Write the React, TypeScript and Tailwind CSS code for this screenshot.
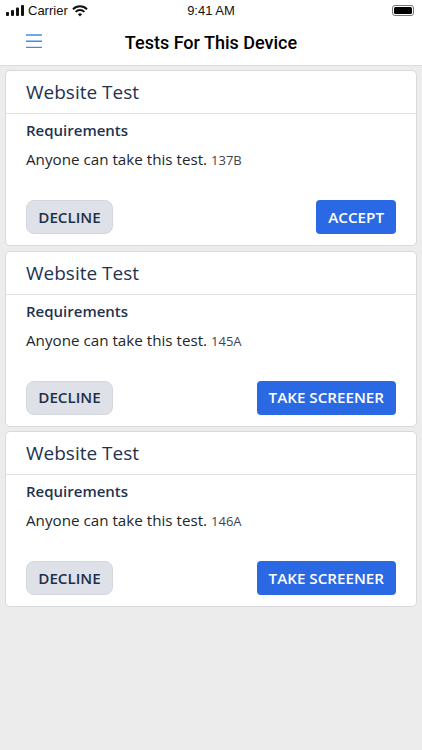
const tests = [
  { code: '137B', action: 'ACCEPT' },
  { code: '145A', action: 'TAKE SCREENER' },
  { code: '146A', action: 'TAKE SCREENER' },
];

function TestCard({ code, action }: { code: string; action: string }) {
  return (
    <div className="h-[176px] bg-white rounded-[5px] border border-[#d8dadd] flex flex-col">
      <div className="h-[43px] px-5 pt-[1px] flex items-center border-b border-[#dfe1e4] text-[19px] text-[#1f3350]">
        Website Test
      </div>
      <div className="flex-1 px-5 pt-[6px] flex flex-col">
        <div className="text-[15px] leading-[20px] font-semibold text-[#1f3350]">Requirements</div>
        <div className="mt-[9px] text-[15.2px] leading-[20px] text-[#22262b]">
          Anyone can take this test. <span className="text-[13px] text-[#3d4650]">{code}</span>
        </div>
        <div className="mt-auto mb-[11px] flex items-center justify-between">
          <button className="h-[34px] w-[87px] rounded-[8px] bg-[#dee2e8] border border-[#d3d7dd] text-[15.2px] font-semibold text-[#1f2f47]">
            DECLINE
          </button>
          <button className="h-[34px] px-3 rounded-[4px] bg-[#2a69e3] text-[15.2px] font-semibold text-white">
            {action}
          </button>
        </div>
      </div>
    </div>
  );
}

export default function App() {
  return (
    <div className="w-[422px] h-[750px] bg-[#ececec] flex flex-col font-['Open_Sans',sans-serif] overflow-hidden">
      <div className="h-[66px] bg-white border-b border-[#dcdcdc] shrink-0">
        {/* status bar */}
        <div className="h-[21px] px-[6px] flex items-center justify-between font-['Liberation_Sans',sans-serif] text-[13px] text-[#111]">
          <div className="w-[140px] flex items-center gap-[4px]">
            <svg width="18" height="11" viewBox="0 0 18 11" fill="#111">
              <rect x="0" y="7" width="3" height="4" rx="1" />
              <rect x="5" y="5" width="3" height="6" rx="1" />
              <rect x="10" y="2.5" width="3" height="8.5" rx="1" />
              <rect x="15" y="0" width="3" height="11" rx="1" />
            </svg>
            <span>Carrier</span>
            <svg width="16" height="12" viewBox="0 0 16 12" fill="none" stroke="#111" strokeWidth="2">
              <path d="M1 4.2a10 10 0 0 1 14 0" />
              <path d="M3.6 6.9a6.3 6.3 0 0 1 8.8 0" />
              <path d="M8 11.5 5.9 9.3a3 3 0 0 1 4.2 0Z" fill="#111" stroke="none" />
            </svg>
          </div>
          <span>9:41 AM</span>
          <div className="w-[140px] flex justify-end pr-[2px]">
            <div className="w-[22px] h-[11px] rounded-[3px] border border-[#777] p-[1px]">
              <div className="w-full h-full rounded-[1.5px] bg-black" />
            </div>
          </div>
        </div>
        {/* nav bar */}
        <div className="relative h-[45px] pb-[2px] flex items-center justify-center">
          <svg className="absolute left-[26px] top-[13px]" width="16" height="14" viewBox="0 0 16 14" fill="none" stroke="#3f8ede" strokeWidth="1.4">
            <path d="M0 1h16M0 7.3h16M0 13.5h16" />
          </svg>
          <div className="text-[18px] font-medium text-black font-['Roboto',sans-serif]">Tests For This Device</div>
        </div>
      </div>
      <div className="px-[5px] pt-[4px] flex flex-col gap-[4.5px]">
        {tests.map((t) => (
          <TestCard key={t.code} code={t.code} action={t.action} />
        ))}
      </div>
    </div>
  );
}
